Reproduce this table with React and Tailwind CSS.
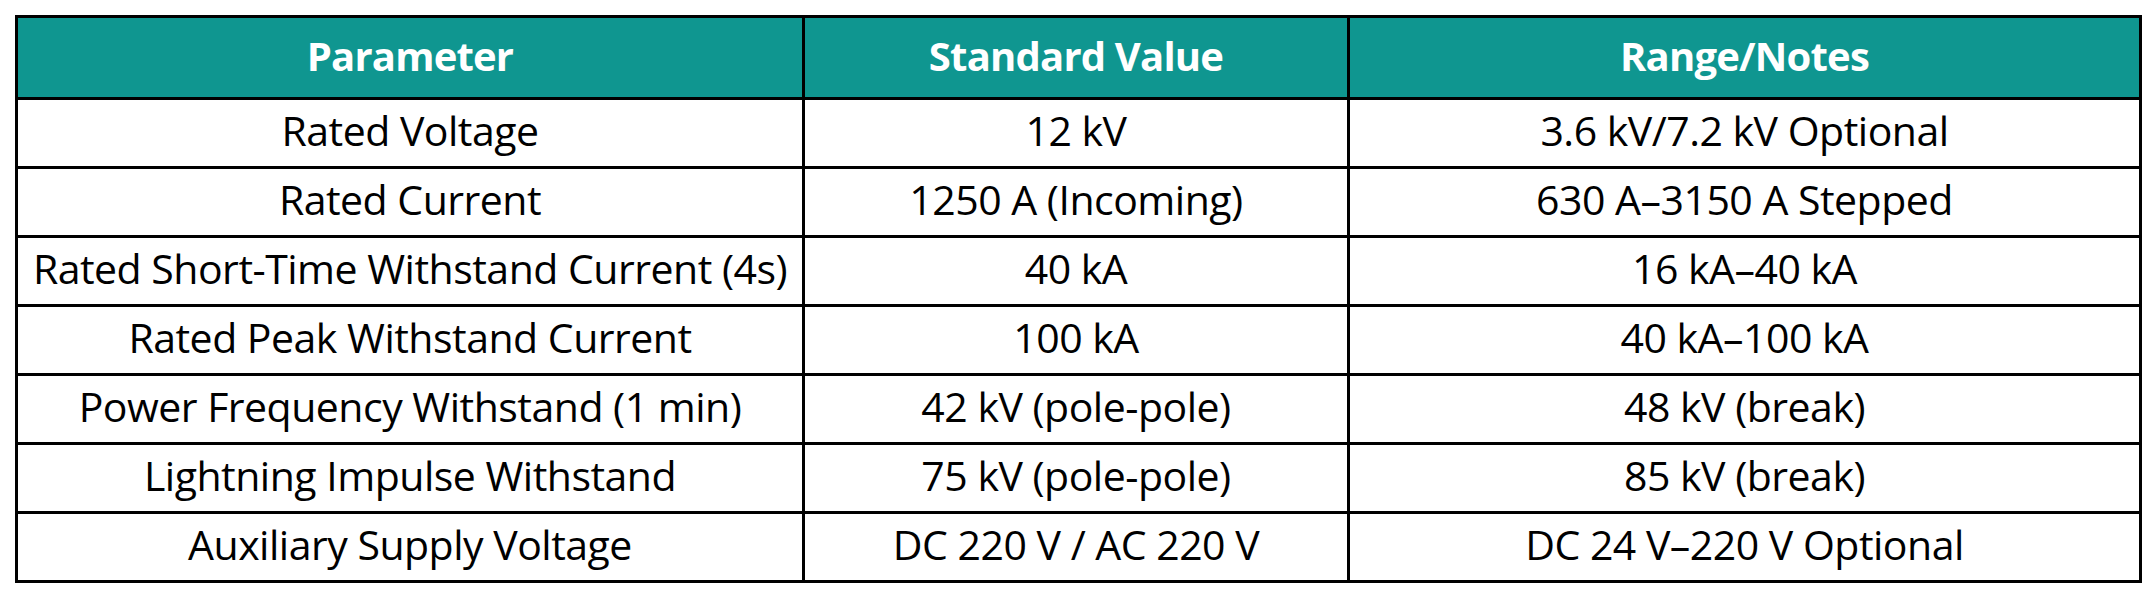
const rows = [
  ["Rated Voltage", "12 kV", "3.6 kV/7.2 kV Optional"],
  ["Rated Current", "1250 A (Incoming)", "630 A–3150 A Stepped"],
  ["Rated Short-Time Withstand Current (4s)", "40 kA", "16 kA–40 kA"],
  ["Rated Peak Withstand Current", "100 kA", "40 kA–100 kA"],
  ["Power Frequency Withstand (1 min)", "42 kV (pole-pole)", "48 kV (break)"],
  ["Lightning Impulse Withstand", "75 kV (pole-pole)", "85 kV (break)"],
  ["Auxiliary Supply Voltage", "DC 220 V / AC 220 V", "DC 24 V–220 V Optional"],
];

export default function App() {
  return (
    <div className="w-[2154px] h-[596px] bg-white pt-[15px] pl-[15px]" style={{ fontFamily: '"Open Sans", "Noto Sans", sans-serif' }}>
      <table className="w-[2124px] border-collapse border-[3px] border-black text-black table-fixed">
        <colgroup>
          <col className="w-[787px]" />
          <col className="w-[545px]" />
          <col className="w-[792px]" />
        </colgroup>
        <thead>
          <tr className="h-[82px] bg-[#0f9690] text-white">
            <th className="border-[3px] border-black pb-[4px] text-[40px] font-bold tracking-[-0.8px]">Parameter</th>
            <th className="border-[3px] border-black pb-[4px] text-[40px] font-bold tracking-[-0.8px]">Standard Value</th>
            <th className="border-[3px] border-black pb-[4px] text-[40px] font-bold tracking-[-0.8px]">Range/Notes</th>
          </tr>
        </thead>
        <tbody>
          {rows.map((r) => (
            <tr key={r[0]} className="h-[69px]">
              {r.map((c, i) => (
                <td key={i} className="border-[3px] border-black pb-[5px] text-center text-[41px] leading-none whitespace-nowrap tracking-[-0.5px]">
                  {c}
                </td>
              ))}
            </tr>
          ))}
        </tbody>
      </table>
    </div>
  );
}
